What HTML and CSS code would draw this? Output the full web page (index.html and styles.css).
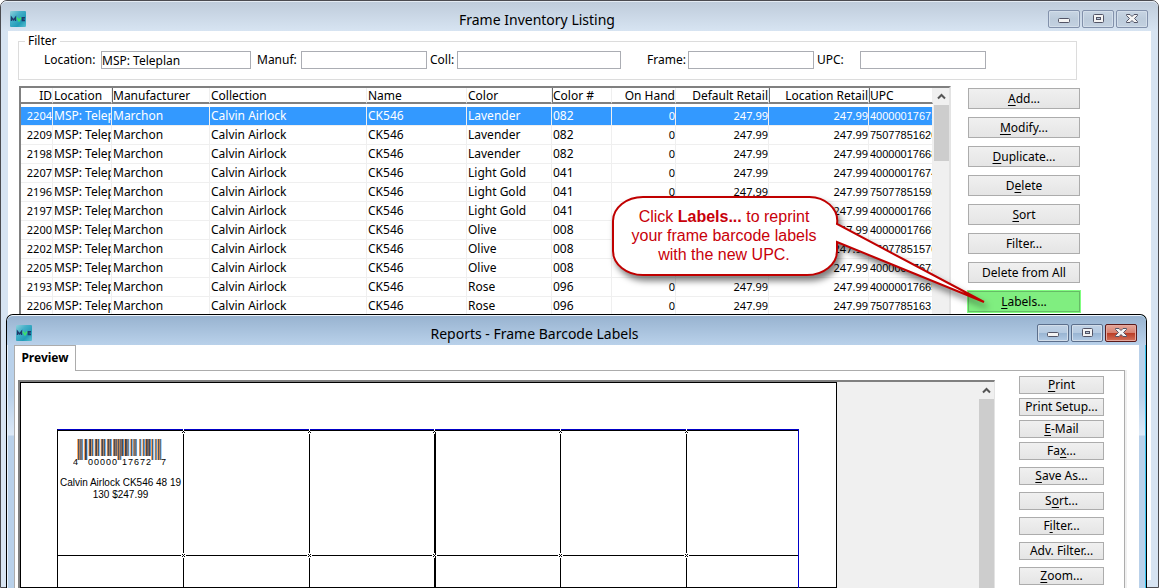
FILE: index.html
```html
<!DOCTYPE html>
<html lang="en">
<head>
  <meta charset="UTF-8">
  <title>Frame Inventory Listing</title>
  <link rel="stylesheet" href="styles.css">
</head>
<body>
  <svg class="defs" aria-hidden="true">
    <defs>
      <linearGradient id="tile" x1="0" y1="0" x2="1" y2="1">
        <stop offset="0" stop-color="#8fd0dc"/>
        <stop offset="0.35" stop-color="#45b0c8"/>
        <stop offset="0.7" stop-color="#229cb8"/>
        <stop offset="1" stop-color="#5cc0d2"/>
      </linearGradient>
      <symbol id="app-icon" viewBox="0 0 16 16">
        <rect width="16" height="16" rx="1" fill="url(#tile)"/>
        <path d="M1.5 10V6.5L3.5 9L5.5 6.5V10" fill="none" stroke="#1f3a6b" stroke-width="1.4"/>
        <path d="M7 6.5L9 9.8L11 6.5" fill="none" stroke="#3fe06a" stroke-width="1.5"/>
        <path d="M15 6.7H12.2V9.6H15M12.2 8.1H14.6" fill="none" stroke="#1f3a6b" stroke-width="1.2"/>
      </symbol>
      <symbol id="min" viewBox="0 0 12 10">
        <rect x="0.5" y="4.5" width="11" height="4" rx="1" fill="#f4f4f4" stroke="#525466"/>
      </symbol>
      <symbol id="max" viewBox="0 0 12 10">
        <rect x="1.5" y="0.5" width="10" height="8" rx="1" fill="#f4f4f4" stroke="#525466"/>
        <rect x="4.5" y="3.5" width="4" height="2" fill="#b8c8da" stroke="#525466"/>
      </symbol>
      <symbol id="close" viewBox="0 0 12 10">
        <path d="M0.5 0.5H4L6 2.5L8 0.5H11.5V1.5L8.5 4.5L11.5 7.5V8.5H8L6 6.5L4 8.5H0.5V7.5L3.5 4.5L0.5 1.5Z" fill="#f4f4f4" stroke="#525466"/>
      </symbol>
      <symbol id="up" viewBox="0 0 9 7">
        <path d="M1 5.5L4.5 2L8 5.5" fill="none" stroke="#555" stroke-width="2"/>
      </symbol>
    </defs>
  </svg>

  <main class="window inventory">
    <header class="titlebar">
      <svg class="app-icon"><use href="#app-icon"/></svg>
      <h1>Frame Inventory Listing</h1>
      <div class="controls">
        <button aria-label="Minimize"><svg><use href="#min"/></svg></button>
        <button aria-label="Maximize"><svg><use href="#max"/></svg></button>
        <button aria-label="Close"><svg><use href="#close"/></svg></button>
      </div>
    </header>

    <div class="client">
      <fieldset class="filter">
        <legend>Filter</legend>
        <label class="l-location" for="location">Location:</label>
        <input class="w-location" id="location" type="text" value="MSP: Teleplan">
        <label class="l-manuf" for="manuf">Manuf:</label>
        <input class="w-name" id="manuf" type="text">
        <label class="l-coll" for="coll">Coll:</label>
        <input class="w-coll" id="coll" type="text">
        <label class="l-frame" for="frame">Frame:</label>
        <input class="w-name" id="frame" type="text">
        <label class="l-upc" for="upc">UPC:</label>
        <input class="w-name" id="upc" type="text">
      </fieldset>

      <div class="listing">
        <div class="grid">
          <table>
            <colgroup>
              <col class="c-id"><col class="c-loc"><col class="c-manuf"><col class="c-coll"><col class="c-name">
              <col class="c-color"><col class="c-num"><col class="c-hand"><col class="c-retail"><col class="c-locretail"><col class="c-upc">
            </colgroup>
            <thead>
              <tr>
                <th class="num">ID</th>
                <th>Location</th>
                <th class="edge">Manufacturer</th>
                <th>Collection</th>
                <th>Name</th>
                <th>Color</th>
                <th class="edge">Color #</th>
                <th class="num">On Hand</th>
                <th class="num">Default Retail</th>
                <th class="num edge">Location Retail</th>
                <th class="edge">UPC</th>
              </tr>
            </thead>
            <tbody id="frames"></tbody>
          </table>
          <div class="scrollbar">
            <svg><use href="#up"/></svg>
            <div class="thumb"></div>
          </div>
        </div>

        <div class="actions">
          <button><u>A</u>dd...</button>
          <button><u>M</u>odify...</button>
          <button><u>D</u>uplicate...</button>
          <button>D<u>e</u>lete</button>
          <button><u>S</u>ort</button>
          <button>Filter...</button>
          <button>Delete from All</button>
          <button class="marked"><u>L</u>abels...</button>
        </div>
      </div>
    </div>
  </main>

  <aside class="callout">
    <svg viewBox="0 0 390 130">
      <path d="M32 17H196A28 24 0 0 1 226 44L373 122L226 62V71A30 24 0 0 1 196 95H32A30 24 0 0 1 2 71V41A30 24 0 0 1 32 17Z"/>
    </svg>
    <p>Click <b>Labels...</b> to reprint<br>your frame barcode labels<br>with the new UPC.</p>
  </aside>

  <section class="window reports">
    <header class="titlebar">
      <svg class="app-icon"><use href="#app-icon"/></svg>
      <h1>Reports - Frame Barcode Labels</h1>
      <div class="controls">
        <button aria-label="Minimize"><svg><use href="#min"/></svg></button>
        <button aria-label="Maximize"><svg><use href="#max"/></svg></button>
        <button class="close" aria-label="Close"><svg><use href="#close"/></svg></button>
      </div>
    </header>

    <div class="client">
      <button class="tab">Preview</button>
      <div class="panel">
        <div class="preview">
          <div class="paper">
            <div class="sheet" id="sheet">
              <div class="label">
                <svg class="barcode" id="barcode" viewBox="0 0 96 28"></svg>
                <p>Calvin Airlock CK546 48 19<br>130 $247.99</p>
              </div>
            </div>
          </div>
          <div class="scrollbar">
            <svg><use href="#up"/></svg>
            <div class="thumb"></div>
          </div>
        </div>

        <div class="actions">
          <button><u>P</u>rint</button>
          <button>Print Setup...</button>
          <button><u>E</u>-Mail</button>
          <button>Fa<u>x</u>...</button>
          <button class="spaced"><u>S</u>ave As...</button>
          <button class="spaced">S<u>o</u>rt...</button>
          <button class="spaced">F<u>i</u>lter...</button>
          <button class="spaced">Adv. Filter...</button>
          <button class="spaced"><u>Z</u>oom...</button>
        </div>
      </div>
    </div>
  </section>

  <script src="script.js"></script>
</body>
</html>
```
FILE: styles.css
```css
* {
  box-sizing: border-box;
}

body {
  margin: 0;
  height: 100vh;
  position: relative;
  overflow: hidden;
  background: white;
  color: black;
  font-family: 'Segoe UI', 'Noto Sans', 'Open Sans', sans-serif;
  font-size: 12px;
}

button, input {
  font: inherit;
  color: inherit;
  margin: 0;
  padding: 0;
}

.defs {
  position: absolute;
  width: 0;
  height: 0;
}

/* windows */

.window {
  border: 1px solid #4b4b50;
  border-radius: 7px 7px 0 0;
  padding: 0 7px;
}

.inventory {
  height: 100%;
  display: flex;
  flex-direction: column;
  background: #d7e4f2;
  padding-bottom: 7px;
  box-shadow: inset 0 1px #e8eff7;
}

.titlebar {
  flex: none;
  height: 30px;
  margin: 0 -7px;
  padding: 0 10px 0 9px;
  display: flex;
  align-items: center;
  background: linear-gradient(#bfccdb, #d7e4f2);
  border-top: 1px solid #e4ebf3;
  border-radius: 6px 6px 0 0;
}

.titlebar h1 {
  flex: 1;
  margin: 6px 0 0;
  text-align: center;
  font-size: 14px;
  font-weight: normal;
  line-height: 20px;
}

.app-icon {
  width: 16px;
  height: 16px;
  margin-top: 4px;
}

.controls {
  display: flex;
  gap: 2px;
  margin-top: 5px;
}

.controls button {
  width: 32px;
  height: 18px;
  display: flex;
  align-items: center;
  justify-content: center;
  background: linear-gradient(#c8d5e3, #bccbdb 50%, #c3d1e0);
  border: 1px solid #8291ab;
  border-radius: 2px;
  box-shadow: inset 0 0 0 1px #d3deea;
}

.controls svg {
  width: 12px;
  height: 10px;
}

.client {
  background: white;
}

/* filter */

.inventory .client {
  flex: 1;
  min-height: 0;
  display: flex;
  flex-direction: column;
  padding: 2px 0 0 10px;
}

.filter {
  display: flex;
  align-items: flex-start;
  height: 47px;
  margin: 0 74px 0 0;
  padding: 2px 0 0 25px;
  border: 1px solid #dcdcdc;
}

.filter legend {
  margin-left: -19px;
  padding: 0 4px 0 3px;
  line-height: 16px;
}

.filter label {
  line-height: 18px;
}

.filter input {
  height: 18px;
  border: 1px solid #abadb3;
  background: white;
  line-height: 14px;
}

.l-location { width: 57px; }
.l-manuf { width: 50px; padding-left: 6px; }
.l-coll { width: 30px; padding-left: 3px; }
.l-frame { width: 67px; padding-left: 26px; }
.l-upc { width: 46px; padding-left: 3px; }
.w-location { width: 150px; }
.w-name { width: 126px; }
.w-coll { width: 164px; }

/* frame listing */

.listing {
  flex: 1;
  min-height: 0;
  display: flex;
  margin: 6px 71px 0 1px;
}

.grid {
  flex: 1;
  display: flex;
  overflow: hidden;
  border-top: 2px solid #808080;
  border-left: 2px solid #808080;
  border-right: 2px solid #e3e3e3;
}

.grid table {
  flex: 1;
  width: 0;
  height: max-content;
  table-layout: fixed;
  border-spacing: 0;
}

.c-id { width: 32px; }
.c-loc { width: 59px; }
.c-manuf { width: 98px; }
.c-name { width: 100px; }
.c-color { width: 85px; }
.c-num { width: 60px; }
.c-hand { width: 64px; }
.c-retail { width: 93px; }
.c-locretail { width: 100px; }
.c-upc { width: 64px; }

.grid th, .grid td {
  padding: 0 0 0 1px;
  overflow: hidden;
  white-space: nowrap;
  text-align: left;
  font-weight: normal;
  border-right: 1px solid #efefef;
}

.grid th {
  height: 16px;
  padding-top: 2px;
  line-height: 12px;
  border-bottom: 2px solid #808080;
}

.grid th.edge {
  box-shadow: inset 1px 0 #696969;
}

.grid tbody::before {
  content: "";
  display: block;
  height: 3px;
}

.grid td {
  height: 19px;
  line-height: 18px;
  border-bottom: 1px solid #efefef;
}

.grid .num {
  text-align: right;
}

.grid td.num {
  font-size: 11px;
}

.grid td.upc {
  font-family: 'Liberation Sans', Arial, sans-serif;
  font-size: 11px;
}

.grid .selected td {
  background: #3399ff;
  color: white;
}

.scrollbar {
  width: 16px;
  display: flex;
  flex-direction: column;
  align-items: center;
  background: #f0f0f0;
}

.scrollbar svg {
  width: 9px;
  height: 7px;
  margin: 5px 0;
}

.thumb {
  width: 15px;
  height: 56px;
  background: #cdcdcd;
}

/* button columns */

.actions {
  display: flex;
  flex-direction: column;
}

.actions button {
  line-height: 16px;
  border: 1px solid #acacac;
  background: linear-gradient(#f0f0f0, #e5e5e5);
}

.actions u {
  text-underline-offset: 2px;
}

.inventory .actions {
  width: 112px;
  gap: 8px;
  margin: 2px 0 0 17px;
}

.inventory .actions button {
  height: 21px;
}

.inventory .actions .marked {
  background: #80ee80;
  border-color: #66bb66;
  outline: 1px solid #80ff80;
}

/* callout */

.callout {
  position: absolute;
  top: 180px;
  right: 158px;
  width: 390px;
  height: 130px;
  z-index: 3;
}

.callout svg {
  position: absolute;
  width: 390px;
  height: 130px;
  overflow: visible;
  filter: drop-shadow(3px 5px 3px rgba(0,0,0,0.5));
}

.callout path {
  fill: white;
  stroke: #c00000;
  stroke-width: 2;
}

.callout p {
  position: relative;
  width: 226px;
  margin: 0;
  padding-top: 27px;
  text-align: center;
  color: #c8000a;
  font-family: 'Liberation Sans', Arial, sans-serif;
  font-size: 16px;
  line-height: 19px;
}

/* reports window */

.reports {
  position: absolute;
  top: 314px;
  left: 6px;
  right: 12px;
  bottom: 0;
  z-index: 2;
  display: flex;
  flex-direction: column;
  overflow: hidden;
  background: linear-gradient(#b9d1ea, #b9d1ea 80px, #dce9f7 120px, #b9d1ea 121px);
  border-color: black;
  border-bottom: 0;
  box-shadow: inset -1px 0 #38c4ee, inset 1px 0 #e8f2fb;
}

.reports .titlebar {
  background: linear-gradient(#98b3d0, #b9d1ea);
  border-top-color: #f0f6fc;
  padding-right: 9px;
}

.reports .controls button {
  background: linear-gradient(#c1d2e5, #b5cae1 50%, #98b4d2 50%, #b3cbe5);
  border-color: #5c6f8c;
}

.reports .controls .close {
  background: linear-gradient(#e5a79b, #d6806f 50%, #b93b24 50%, #d4735c);
  border-color: #5b1a1a;
  box-shadow: inset 0 0 0 1px #e6a99e;
}

.reports .client {
  flex: 1;
  min-height: 0;
  display: flex;
  flex-direction: column;
  align-items: flex-start;
}

.tab {
  flex: none;
  height: 26px;
  width: 62px;
  padding-bottom: 3px;
  position: relative;
  z-index: 1;
  background: white;
  border: 1px solid #acacac;
  border-bottom: 0;
  font-weight: bold;
}

.panel {
  flex: 1;
  min-height: 0;
  width: calc(100% - 14px);
  display: flex;
  margin-top: -1px;
  padding: 5px 20px 0 3px;
  border: 1px solid #acacac;
  border-bottom: 0;
  box-shadow: 2px 0 #f0f0f0;
}

.preview {
  flex: 1;
  display: flex;
  justify-content: space-between;
  margin-top: 4px;
  overflow: hidden;
  background: #f0f0f0;
  border-top: 2px solid #808080;
  border-left: 2px solid #808080;
  border-right: 1px solid #e3e3e3;
}

.paper {
  width: 817px;
  padding: 46px 37px 0 36px;
  background: white;
  border: 1px solid black;
}

.sheet {
  display: grid;
  grid-template-columns: repeat(3, 126px) 125px 126px 1fr;
  grid-auto-rows: 125px;
  border-top: 1px solid #0000c8;
  border-right: 1px solid #0000c8;
  border-left: 1px solid black;
}

.label {
  position: relative;
  border-top: 1px solid black;
  border-right: 1px solid black;
}

.label:nth-child(6n) {
  border-right: 0;
}

.label:nth-child(6n + 3) {
  border-right-width: 2px;
}

/* little marks where the labels meet */
.mark {
  position: absolute;
  right: -3px;
  bottom: -3px;
  width: 5px;
  height: 5px;
  z-index: 1;
}

.mark.top {
  top: -2px;
  bottom: auto;
}

.label p {
  margin: 0;
  padding-top: 10px;
  text-align: center;
  white-space: nowrap;
  font-family: 'Liberation Sans', Arial, sans-serif;
  font-size: 10px;
  line-height: 12px;
}

.barcode {
  display: block;
  width: 96px;
  height: 28px;
  margin: 8px 0 0 15px;
  font-family: 'Liberation Sans', Arial, sans-serif;
  font-size: 9px;
}

.preview .scrollbar .thumb {
  flex: 1;
}

.reports .actions {
  width: 85px;
  gap: 4px;
  margin-left: 24px;
}

.reports .actions button {
  flex: none;
  height: 18px;
  line-height: 14px;
}

.reports .actions .spaced {
  margin-top: 3px;
}
```
FILE: script.js
```js
const frames = [
  [2204, 'Lavender', '082', '400000176727'],
  [2209, 'Lavender', '082', '750778516201'],
  [2198, 'Lavender', '082', '400000176680'],
  [2207, 'Light Gold', '041', '400000176741'],
  [2196, 'Light Gold', '041', '750778515983'],
  [2197, 'Light Gold', '041', '400000176673'],
  [2200, 'Olive', '008', '400000176697'],
  [2202, 'Olive', '008', '750778515761'],
  [2205, 'Olive', '008', '400000176734'],
  [2193, 'Rose', '096', '400000176659'],
  [2206, 'Rose', '096', '750778516317'],
];

document.getElementById('frames').innerHTML = frames.map(([id, color, num, upc], i) => `
  <tr class="${i === 0 ? 'selected' : ''}">
    <td class="num">${id}</td>
    <td>MSP: Teleplan</td>
    <td>Marchon</td>
    <td>Calvin Airlock</td>
    <td>CK546</td>
    <td>${color}</td>
    <td>${num}</td>
    <td class="num">0</td>
    <td class="num">247.99</td>
    <td class="num">247.99</td>
    <td class="upc">${upc}</td>
  </tr>`).join('');

// two rows of labels, the first cell is already in the page
const sheet = document.getElementById('sheet');
for (let i = 1; i < 12; i++) {
  sheet.insertAdjacentHTML('beforeend', '<div class="label"></div>');
}

const mark = cls => `<svg class="mark ${cls}" viewBox="0 0 5 5"><path d="M2 0H3V2H5V3H3V5H2V3H0V2H2Z" fill="white"/><path d="M1 1H2V2H1ZM3 1H4V2H3ZM1 3H2V4H1ZM3 3H4V4H3ZM2 2H3V3H2Z"/></svg>`;
document.querySelectorAll('.label').forEach((label, i) => {
  if (i % 6 === 5) return;
  label.insertAdjacentHTML('beforeend', mark(''));
  if (i < 6) label.insertAdjacentHTML('beforeend', mark('top'));
});

// UPC-A bars, one unit = 0.87px
const left = ['0001101', '0011001', '0010011', '0111101', '0100011', '0110001', '0101111', '0111011', '0110111', '0001011'];
const code = '400000176727';
const flip = s => s.replace(/./g, c => (c === '1' ? '0' : '1'));
const bits = '101' + [...code.slice(0, 6)].map(d => left[d]).join('') + '01010' +
  [...code.slice(6)].map(d => flip(left[d])).join('') + '101';

let fringes = '';
let bars = '';
[...bits].forEach((bit, i) => {
  if (bit === '0') return;
  const x = 5 + i * 0.87;
  const tall = i < 10 || i > 84 || (i > 44 && i < 50);
  const h = tall ? 21 : 17;
  // colour fringes left and right of each bar
  fringes += `<rect x="${x - 0.8}" width="0.8" height="${h}" fill="#ff9838"/>`;
  fringes += `<rect x="${x + 0.87}" width="0.8" height="${h}" fill="#38a8ff"/>`;
  bars += `<rect x="${x}" width="0.87" height="${h}" fill="#101028" fill-opacity="0.8"/>`;
});
const digits = [[0, '4'], [15, '0'], [21, '0'], [27, '0'], [33, '0'], [39, '0'], [49, '1'], [55, '7'], [61, '6'], [67, '7'], [73, '2'], [88, '7']];
const text = digits.map(([x, d]) => `<text x="${x}" y="26">${d}</text>`).join('');
document.getElementById('barcode').innerHTML = fringes + bars + text;
```
